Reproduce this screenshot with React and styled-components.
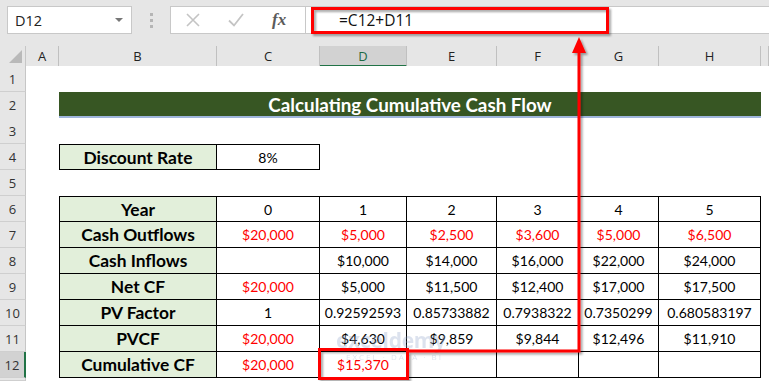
import React from "react";
import styled, { createGlobalStyle } from "styled-components";

const Global = createGlobalStyle`
  html, body { margin: 0; padding: 0; background: #e6e6e6; }
  body { width: 769px; height: 381px; overflow: hidden; }
`;

const COLS = "26px 33px 158px 103px 87px 90px 82px 80px 102px 1fr";
const CELL_FONT = `"Lato", "Open Sans", sans-serif`;
const UI_FONT = `"Open Sans", "Noto Sans", sans-serif`;

const Page = styled.div`
  position: relative;
  width: 769px;
  height: 381px;
  overflow: hidden;
  background: #e6e6e6;
`;

const Toolbar = styled.div`
  display: flex;
  align-items: center;
  height: 28px;
  padding: 6px 0 12px 7px;
  background: #e6e6e6;
`;

const NameBox = styled.div`
  display: flex;
  align-items: center;
  justify-content: space-between;
  box-sizing: border-box;
  width: 125px;
  height: 28px;
  padding: 0 8px 0 7px;
  background: #fff;
  border: 1px solid #c8c8c8;
  font-family: ${UI_FONT};
  font-size: 14.5px;
  color: #222;
`;

const Caret = styled.span`
  width: 0;
  height: 0;
  border-left: 4px solid transparent;
  border-right: 4px solid transparent;
  border-top: 4px solid #777;
`;

const Grip = styled.div`
  display: flex;
  flex-direction: column;
  gap: 3px;
  margin: 0 17px 0 18px;
  span {
    width: 3px;
    height: 3px;
    background: #b5b5b5;
  }
`;

const FxBox = styled.div`
  display: flex;
  align-items: center;
  box-sizing: border-box;
  width: 136px;
  height: 28px;
  padding: 0 0 0 14px;
  gap: 26px;
  background: #fff;
  border: 1px solid #c8c8c8;
`;

const FxText = styled.span`
  font-family: "Liberation Serif", serif;
  font-style: italic;
  font-weight: bold;
  font-size: 17px;
  color: #5b5b5b;
  margin-left: 1px;
`;

const FormulaInput = styled.div`
  flex: 1;
  display: flex;
  align-items: center;
  box-sizing: border-box;
  height: 28px;
  padding-left: 33px;
  background: #fff;
  border-top: 1px solid #c8c8c8;
  border-bottom: 1px solid #c8c8c8;
  font-family: ${UI_FONT};
  font-size: 15.5px;
  color: #111;
`;

const Row = styled.div`
  display: grid;
  grid-template-columns: ${COLS};
  height: ${(p) => p.$h || 26}px;
  overflow: hidden;
  background: #fff;
`;

const HeaderRow = styled(Row)`
  background: #e6e6e6;
`;

const Corner = styled.div`
  position: relative;
  border-right: 1px solid #c6c6c6;
  border-bottom: 1px solid #c6c6c6;
  &::after {
    content: "";
    position: absolute;
    right: 3px;
    bottom: 3px;
    border-left: 13px solid transparent;
    border-bottom: 13px solid #b9b9b9;
  }
`;

const ColHead = styled.div`
  display: flex;
  align-items: center;
  justify-content: center;
  box-sizing: border-box;
  font-family: ${UI_FONT};
  font-size: 13px;
  color: ${(p) => (p.$sel ? "#1e6b45" : "#222")};
  background: ${(p) => (p.$sel ? "#d2d2d2" : "#e6e6e6")};
  border-right: 1px solid #c0c0c0;
  border-bottom: ${(p) => (p.$sel ? "2px solid #217346" : "1px solid #c0c0c0")};
  padding-top: ${(p) => (p.$sel ? "1px" : "0")};
`;

const RowHead = styled.div`
  display: flex;
  align-items: center;
  justify-content: center;
  box-sizing: border-box;
  font-family: ${UI_FONT};
  font-size: 13px;
  color: #333;
  background: ${(p) => (p.$sel ? "#d2d2d2" : "#e6e6e6")};
  border-right: ${(p) => (p.$sel ? "2px solid #217346" : "1px solid #c6c6c6")};
  border-bottom: 1px solid #cfcfcf;
`;

const Cell = styled.div`
  display: flex;
  align-items: center;
  justify-content: center;
  box-sizing: border-box;
  font-family: ${CELL_FONT};
  font-weight: ${(p) => (p.$label ? 700 : 400)};
  font-size: ${(p) => (p.$label ? "17.4px" : "14px")};
  color: ${(p) => (p.$red ? "#ff0000" : "#000")};
  background: ${(p) => (p.$label ? "#e2efda" : "#fff")};
  white-space: nowrap;
  ${(p) =>
    p.$boxed &&
    `
    border-right: 1px solid #000;
    border-bottom: 1px solid #000;
  `}
  ${(p) => p.$top && `border-top: 1px solid #000;`}
  ${(p) => p.$left && `border-left: 1px solid #000;`}
`;

const Title = styled.div`
  grid-column: 3 / span 7;
  display: flex;
  align-items: center;
  justify-content: center;
  box-sizing: border-box;
  background: #375623;
  border-bottom: 3px solid #9fb5dc;
  color: #fff;
  font-family: ${CELL_FONT};
  font-weight: 700;
  font-size: 18.8px;
  padding-top: 1px;
`;

const Overlay = styled.svg`
  position: absolute;
  left: 0;
  top: 0;
  pointer-events: none;
`;

const Watermark = styled.div`
  position: absolute;
  left: 316px;
  top: 329px;
  display: flex;
  flex-direction: column;
  align-items: flex-start;
  opacity: 0.3;
  color: #8fa3c8;
  font-family: ${UI_FONT};
  pointer-events: none;
  b {
    font-size: 21px;
    font-weight: 700;
    letter-spacing: -0.3px;
    line-height: 22px;
    padding-left: 20px;
  }
  small {
    font-size: 8px;
    letter-spacing: 2px;
    padding-left: 30px;
  }
`;

const letters = ["A", "B", "C", "D", "E", "F", "G", "H", ""];

const table = [
  ["Year", ["0"], ["1"], ["2"], ["3"], ["4"], ["5"]],
  ["Cash Outflows", ["$20,000", 1], ["$5,000", 1], ["$2,500", 1], ["$3,600", 1], ["$5,000", 1], ["$6,500", 1]],
  ["Cash Inflows", [""], ["$10,000"], ["$14,000"], ["$16,000"], ["$22,000"], ["$24,000"]],
  ["Net CF", ["$20,000", 1], ["$5,000"], ["$11,500"], ["$12,400"], ["$17,000"], ["$17,500"]],
  ["PV Factor", ["1"], ["0.92592593"], ["0.85733882"], ["0.7938322"], ["0.7350299"], ["0.680583197"]],
  ["PVCF", ["$20,000", 1], ["$4,630"], ["$9,859"], ["$9,844"], ["$12,496"], ["$11,910"]],
  ["Cumulative CF", ["$20,000", 1], ["$15,370", 1], [""], [""], [""], [""]],
];

function BlankRow({ n, h }) {
  return (
    <Row $h={h}>
      <RowHead>{n}</RowHead>
      {letters.map((_, i) => (
        <Cell key={i} />
      ))}
    </Row>
  );
}

export default function App() {
  return (
    <Page>
      <Global />
      <Toolbar>
        <NameBox>
          D12
          <Caret />
        </NameBox>
        <Grip>
          <span />
          <span />
          <span />
        </Grip>
        <FxBox>
          <svg width="16" height="16" viewBox="0 0 16 16">
            <path d="M2 2 L14 14 M14 2 L2 14" stroke="#c4c4c4" strokeWidth="1.6" fill="none" />
          </svg>
          <svg width="18" height="16" viewBox="0 0 18 16">
            <path d="M2 8.5 L7 13.5 L16 2" stroke="#c4c4c4" strokeWidth="1.8" fill="none" />
          </svg>
          <FxText>fx</FxText>
        </FxBox>
        <FormulaInput>=C12+D11</FormulaInput>
      </Toolbar>

      <HeaderRow $h={20}>
        <Corner />
        {letters.map((l, i) => (
          <ColHead key={i} $sel={l === "D"}>
            {l}
          </ColHead>
        ))}
      </HeaderRow>

      <BlankRow n={1} />
      <Row>
        <RowHead>2</RowHead>
        <Cell />
        <Title>Calculating Cumulative Cash Flow</Title>
        <Cell />
      </Row>
      <BlankRow n={3} />
      <Row>
        <RowHead>4</RowHead>
        <Cell />
        <Cell $label $boxed $top $left>
          Discount Rate
        </Cell>
        <Cell $boxed $top>
          8%
        </Cell>
        {[0, 1, 2, 3, 4, 5].map((i) => (
          <Cell key={i} />
        ))}
      </Row>
      <BlankRow n={5} />
      {table.map((r, ri) => (
        <Row key={ri}>
          <RowHead $sel={ri === 6}>{ri + 6}</RowHead>
          <Cell />
          <Cell $label $boxed $left $top={ri === 0}>
            {r[0]}
          </Cell>
          {r.slice(1).map(([v, red], ci) => (
            <Cell key={ci} $boxed $top={ri === 0} $red={!!red}>
              {v}
            </Cell>
          ))}
          <Cell />
        </Row>
      ))}
      <BlankRow n="" h={3} />

      <Watermark>
        <b>exceldemy</b>
        <small>EXCEL · DATA · BI</small>
      </Watermark>

      <Overlay width="769" height="381" viewBox="0 0 769 381">
        <defs>
          <filter id="sh" x="-10%" y="-10%" width="130%" height="130%">
            <feDropShadow dx="2" dy="2" stdDeviation="1.2" floodColor="#000" floodOpacity="0.35" />
          </filter>
        </defs>
        <g filter="url(#sh)">
          <rect x="312.5" y="8.5" width="295" height="24" fill="none" stroke="#ff0000" strokeWidth="3" />
          <rect x="319.5" y="349.5" width="88" height="29" fill="none" stroke="#ff0000" strokeWidth="3" />
          <polyline points="409,351 579,351 579,50" fill="none" stroke="#ff0000" strokeWidth="3" />
          <polygon points="579,37 572,53 586,53" fill="#ff0000" />
        </g>
      </Overlay>
    </Page>
  );
}
